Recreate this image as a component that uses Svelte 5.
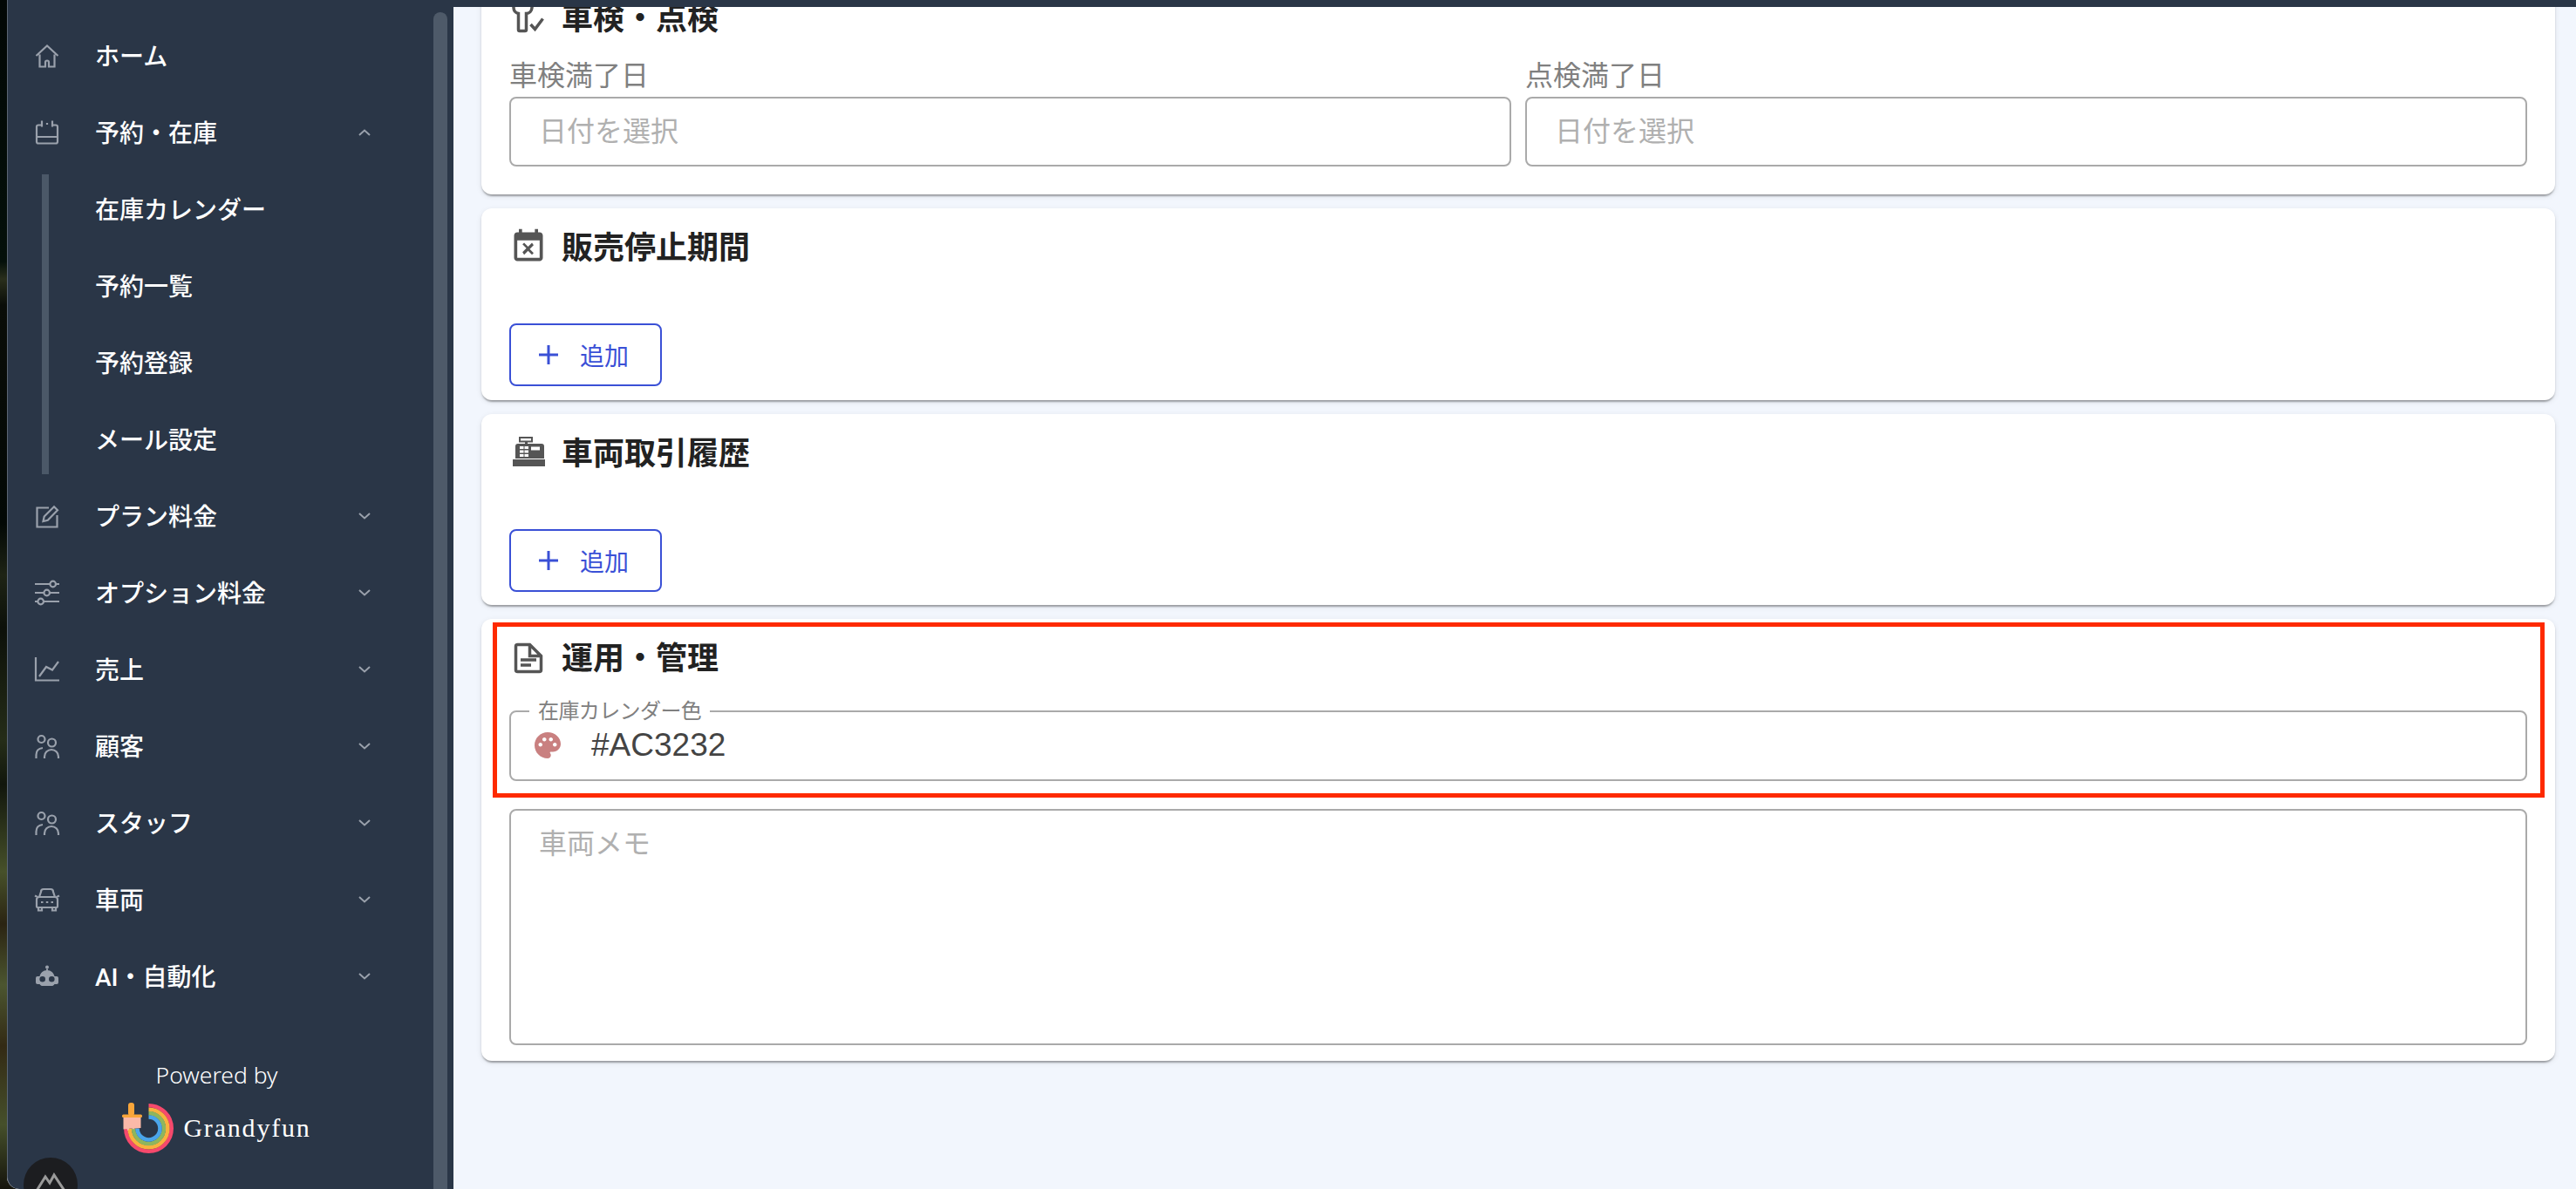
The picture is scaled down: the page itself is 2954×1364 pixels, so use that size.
<script>
  // sidebar icons, all drawn in a 28 box
  const icons = {
    home: "M1.500 14 14 2.500 26.500 14M5.500 12.500V26.500h6.500v-5a2 2 0 0 1 4 0v5h6.500V12.500",
    calendar: "M8 5.500H4a2 2 0 0 0-2 2v17a2 2 0 0 0 2 2h20a2 2 0 0 0 2-2v-17a2 2 0 0 0-2-2h-4M8 .5v7M20 .5v7M14 3v2M2 19h24",
    edit: "M16 4.500H2.500v22h23V13M9.500 20l1.200-5.500L22 3.200l4 4L14.800 18.800z",
    sliders: "M0 4h17M24 4h4M0 14h10M17 14h11M0 24h3M10 24h18M24 4a3.300 3.300 0 1 1-6.600 0 3.300 3.300 0 1 1 6.600 0M17 14a3.300 3.300 0 1 1-6.600 0 3.300 3.300 0 1 1 6.600 0M10 24a3.300 3.300 0 1 1-6.600 0 3.300 3.300 0 1 1 6.600 0",
    chart: "M1 0v26.500h27M5 22l8-11 7 3.500 7-9.500",
    people: "M1.500 28v-4c0-4.500 3-7.500 7.500-8M11 28v-2a8 8 0 0 1 16 0v2M11.500 6a4 4 0 1 1-8 0 4 4 0 1 1 8 0M24 10a4.500 4.500 0 1 1-9 0 4.500 4.500 0 1 1 9 0",
    car: "M5 11l2-6a3 3 0 0 1 3-3h8a3 3 0 0 1 3 3l2 6M2 14a3 3 0 0 1 3-3h18a3 3 0 0 1 3 3v8a1 1 0 0 1-1 1H3a1 1 0 0 1-1-1zM4 23v3.500h4V23M20 23v3.500h4V23M7 17h2.500M12.800 17h2.500M18.500 17h2.500M0 9.500l3 1.500M28 9.500L25 11",
    robot: "M14 1.500a2 2 0 1 1 0 4 2 2 0 1 1 0-4zM13 5h2v2h-2zM5.500 14C6.500 10 9.500 7 14 7s7.500 3 8.500 7H25a2 2 0 0 1 2 2v5a2 2 0 0 1-2 2h-2.500c-1 1.500-2 2-3 2H8.500c-1 0-2-.5-3-2H3a2 2 0 0 1-2-2v-5a2 2 0 0 1 2-2zM8.700 14a3.300 3.300 0 1 0 0 6.600 3.300 3.300 0 1 0 0-6.600zM19.300 14a3.300 3.300 0 1 0 0 6.600 3.300 3.300 0 1 0 0-6.600z",
  };

  const menu = [
    { label: "ホーム", icon: "home" },
    { label: "予約・在庫", icon: "calendar", open: true, children: ["在庫カレンダー", "予約一覧", "予約登録", "メール設定"] },
    { label: "プラン料金", icon: "edit", more: true },
    { label: "オプション料金", icon: "sliders", more: true },
    { label: "売上", icon: "chart", more: true },
    { label: "顧客", icon: "people", more: true },
    { label: "スタッフ", icon: "people", more: true },
    { label: "車両", icon: "car", more: true },
    { label: "AI・自動化", icon: "robot", more: true },
  ];

  const rings = [
    { r: 26.2, color: "#f6496c" },
    { r: 21.8, color: "#f9b23e" },
    { r: 17.4, color: "#8fb65c" },
    { r: 13, color: "#4aa5ea" },
  ];
</script>

<div class="page">
  <div class="window">
    <aside class="sidebar">
      <div class="nav">
        <ul class="menu">
          {#each menu as item}
            <li>
              <div class="row">
                <svg class="ic" class:solid={item.icon === "robot"} viewBox="0 0 28 28"><path d={icons[item.icon]} /></svg>
                <span class="label">{item.label}</span>
                {#if item.open}
                  <svg class="chev" viewBox="0 0 14 8"><path d="M1 7l6-5.500L13 7" /></svg>
                {:else if item.more}
                  <svg class="chev" viewBox="0 0 14 8"><path d="M1 1l6 5.500L13 1" /></svg>
                {/if}
              </div>
              {#if item.children}
                <div class="sub">
                  <ul>
                    {#each item.children as child}
                      <li class="row subrow"><span class="label">{child}</span></li>
                    {/each}
                  </ul>
                </div>
              {/if}
            </li>
          {/each}
        </ul>
        <div class="powered">
          <div class="by">Powered by</div>
          <div class="brand">
            <svg class="logo" viewBox="0 0 60 62">
              {#each rings as ring}
                <path d="M30.500 {31.5 - ring.r}A{ring.r} {ring.r} 0 1 1 {30.5 - ring.r} 31.500" fill="none" stroke={ring.color} stroke-width="4.600" />
              {/each}
              <rect x="7" y="2" width="7" height="15" rx="3" fill="#f9a63a" />
              <rect x="0" y="15.500" width="23" height="3.500" rx="1.500" fill="#f9a63a" />
              <path d="M1.500 19h20v12l-7 .500-2 1-1-1-3 0-2 3-1-2.500-4 .500z" fill="#fbb9a8" />
            </svg>
            <span class="name">Grandyfun</span>
          </div>
        </div>
      </div>
      <div class="thumb"></div>
    </aside>

    <main class="main">
      <div class="topbar"></div>
      <div class="content">
        <section class="card">
          <h2>
            <svg class="hicon" viewBox="0 0 44 44">
              <path class="line" d="M5 4v7a7 7 0 0 0 5.500 6.500V36a1.500 1.500 0 0 0 1.500 1.500h6a1.500 1.500 0 0 0 1.500-1.500V17.500A7 7 0 0 0 26 11V4" />
              <path class="line" d="M24.500 30l5 5.500 9-12" />
            </svg>
            <span>車検・点検</span>
          </h2>
          <div class="dates">
            <div>
              <div class="cap">車検満了日</div>
              <input class="box" placeholder="日付を選択" />
            </div>
            <div>
              <div class="cap">点検満了日</div>
              <input class="box" placeholder="日付を選択" />
            </div>
          </div>
        </section>

        <section class="card tight">
          <h2>
            <svg class="hicon" viewBox="0 0 24 24"><path d="M9.310 17l2.440-2.440L14.190 17l1.060-1.060-2.440-2.440 2.440-2.440L14.190 9.500l-2.440 2.440L9.310 9.500l-1.060 1.060 2.440 2.440-2.440 2.440L9.310 17zM19 3h-1V1h-2v2H8V1H6v2H5c-1.110 0-1.990.9-1.990 2L3 19c0 1.100.89 2 2 2h14c1.100 0 2-.9 2-2V5c0-1.100-.9-2-2-2zm0 16H5V8h14v11z" /></svg>
            <span>販売停止期間</span>
          </h2>
          <button class="add"><svg viewBox="0 0 22 22"><path d="M11 0v22M0 11h22" /></svg>追加</button>
        </section>

        <section class="card tight">
          <h2>
            <svg class="hicon" viewBox="0 0 44 44">
              <path fill-rule="evenodd" d="M10 12h27a3 3 0 0 1 3 3v14H7V15a3 3 0 0 1 3-3zM12 15v3h4.500v-3zM17.500 15v3h4.500v-3zM12 19.500v3h4.500v-3zM17.500 19.500v3h4.500v-3zM12 24v3h4.500v-3zM17.500 24v3h4.500v-3zM25 15.500v4h10v-4z" />
              <rect x="4" y="30" width="37" height="8" />
              <rect x="18" y="9" width="3" height="4" />
              <rect class="line thin" x="12" y="5" width="14" height="4.500" />
            </svg>
            <span>車両取引履歴</span>
          </h2>
          <button class="add"><svg viewBox="0 0 22 22"><path d="M11 0v22M0 11h22" /></svg>追加</button>
        </section>

        <section class="card last">
          <h2>
            <svg class="hicon" viewBox="0 0 44 44">
              <path class="line" d="M7.500 9.500a2 2 0 0 1 2-2h14l13 13v16a2 2 0 0 1-2 2h-25a2 2 0 0 1-2-2zM23.500 7.500v13h13" />
              <path class="line" d="M13 25h18M13 31h12" />
            </svg>
            <span>運用・管理</span>
          </h2>
          <fieldset class="outlined">
            <legend>在庫カレンダー色</legend>
            <div class="color">
              <svg class="palette" viewBox="0 0 24 24"><path d="M12 2C6.490 2 2 6.490 2 12s4.490 10 10 10c1.380 0 2.500-1.120 2.500-2.500 0-.61-.23-1.200-.64-1.670-.08-.1-.13-.21-.13-.33 0-.28.22-.5.5-.5H16c3.310 0 6-2.690 6-6 0-4.960-4.490-9-10-9zm5.500 11c-.83 0-1.500-.67-1.500-1.500s.67-1.500 1.500-1.500 1.500.67 1.500 1.500-.67 1.500-1.500 1.500zm-3-4c-.83 0-1.500-.67-1.500-1.500S13.670 6 14.500 6s1.500.67 1.500 1.500S15.330 9 14.500 9zM5 11.500c0-.83.67-1.500 1.500-1.500s1.500.67 1.500 1.500S7.330 13 6.500 13 5 12.330 5 11.500zm6-4c0 .83-.67 1.500-1.500 1.500S8 8.330 8 7.500 8.670 6 9.500 6s1.500.67 1.500 1.500z" /></svg>
              <span>#AC3232</span>
            </div>
          </fieldset>
          <textarea class="box memo" placeholder="車両メモ"></textarea>
          <div class="marker"></div>
        </section>
      </div>
    </main>
  </div>

  <div class="badge">
    <svg viewBox="0 0 34 22"><path d="M1 21 11 5l5 7 5-9 12 18" /></svg>
  </div>
</div>

<style>
  :global(body) {
    margin: 0;
    overflow: hidden;
  }

  .page {
    position: relative;
    height: 1364px;
    overflow: hidden;
    padding-left: 8px;
    box-sizing: border-box;
    font-family: Roboto, "Noto Sans CJK JP", sans-serif;
    /* blurred wallpaper showing at the window edge */
    background: linear-gradient(180deg, #020705 0, #04100a 300px, #2a2f1c 320px, #0a0d08 350px, #020805 600px, #1e2415 660px, #0c1009 720px, #252d18 850px, #11160c 900px, #47512a 1000px, #2b2412 1060px, #4c5630 1130px, #332a14 1200px, #46502b 1290px, #15140c 1364px);
  }

  .window {
    display: flex;
    height: 100%;
    background: #f2f6fd;
    border-bottom-left-radius: 14px;
    overflow: hidden;
  }

  .sidebar {
    display: flex;
    width: 512px;
    flex: none;
    box-sizing: border-box;
    padding-right: 7px;
    background: #2a3647;
    border-left: 1px solid #5b6573;
    border-bottom-left-radius: 14px;
    color: #fff;
  }

  .nav {
    flex: 1;
    min-width: 0;
    padding-top: 20px;
  }

  ul {
    list-style: none;
    margin: 0;
    padding: 0;
  }

  .row {
    display: flex;
    align-items: center;
    height: 88px;
    padding-left: 31px;
  }

  .label {
    margin-left: 41px;
    margin-top: -2px;
    font-size: 28px;
    font-weight: 500;
    white-space: nowrap;
  }

  .ic {
    width: 28px;
    height: 28px;
    flex: none;
    overflow: visible;
    fill: none;
    stroke: #9aa1ac;
    stroke-width: 2.2;
  }

  .ic.solid {
    fill: #9aa1ac;
    fill-rule: evenodd;
    stroke: none;
  }

  .chev {
    width: 14px;
    height: 8px;
    margin-left: auto;
    margin-right: 72px;
    fill: none;
    stroke: #9aa1ac;
    stroke-width: 2;
  }

  .sub {
    display: flow-root;
    margin: 4px 0 4px 39px;
    border-left: 8px solid #4b5868;
  }

  .sub ul {
    margin: -4px 0;
  }

  .subrow {
    padding-left: 12px;
  }

  .powered {
    margin-top: 52px;
    display: flex;
    flex-direction: column;
    align-items: center;
    width: 479px;
  }

  .by {
    font-family: "Noto Sans", sans-serif;
    font-size: 26.500px;
    font-weight: 300;
    line-height: 34px;
  }

  .brand {
    display: flex;
    align-items: center;
    gap: 10px;
    margin-top: 13px;
  }

  .logo {
    width: 60px;
    height: 62px;
  }

  .name {
    font-family: "Liberation Serif", serif;
    font-size: 30px;
    letter-spacing: 1.800px;
  }

  .thumb {
    width: 16px;
    margin-top: 14px;
    flex: none;
    background: #4e5a69;
    border-radius: 8px 8px 0 0;
  }

  .main {
    position: relative;
    flex: 1;
    min-width: 0;
    overflow: hidden;
  }

  .topbar {
    position: relative;
    z-index: 2;
    height: 8px;
    background: #2a3647;
  }

  .content {
    display: flex;
    flex-direction: column;
    gap: 16px;
    margin-top: -32px;
    padding: 0 24px 0 32px;
  }

  .card {
    position: relative;
    padding: 0 32px 32px;
    background: #fff;
    border-radius: 12px;
    box-shadow: 0 4px 2px -2px rgba(0, 0, 0, 0.2), 0 2px 2px 0 rgba(0, 0, 0, 0.14), 0 2px 6px 0 rgba(0, 0, 0, 0.1);
  }

  .card.tight {
    padding-bottom: 15.500px;
  }

  .card.last {
    padding-bottom: 18px;
  }

  h2 {
    display: flex;
    align-items: center;
    gap: 16px;
    height: 88px;
    margin: 0;
    font-size: 36px;
    font-weight: 700;
    color: #222;
  }

  h2 span {
    margin-top: -4px;
  }

  .hicon {
    width: 44px;
    height: 44px;
    flex: none;
    fill: #555;
  }

  .hicon .line {
    fill: none;
    stroke: #555;
    stroke-width: 3.500;
  }

  .hicon .thin {
    stroke-width: 2;
  }

  .dates {
    display: grid;
    grid-template-columns: 1fr 1fr;
    gap: 16px;
    margin-top: -1px;
  }

  .cap {
    font-size: 32px;
    line-height: 48px;
    color: #808080;
  }

  .box {
    display: block;
    width: 100%;
    box-sizing: border-box;
    border: 2px solid #aaa;
    border-radius: 8px;
    background: #fff;
    outline: none;
    font-family: inherit;
    font-size: 32px;
    color: #444;
  }

  input.box {
    height: 80px;
    padding: 0 32px;
  }

  .box::placeholder {
    color: #b0b0b0;
    opacity: 1;
  }

  .add {
    display: flex;
    align-items: center;
    gap: 25px;
    width: 175px;
    height: 72px;
    margin-top: 44px;
    padding: 0 0 0 32px;
    box-sizing: border-box;
    border: 2px solid #3a50d6;
    border-radius: 8px;
    background: #fff;
    font-family: inherit;
    font-size: 28px;
    color: #3a50d6;
  }

  .add svg {
    width: 22px;
    height: 22px;
    fill: none;
    stroke: #3a50d6;
    stroke-width: 3;
  }

  .outlined {
    margin: 6px 0 0;
    padding: 0 0 12px 27px;
    min-width: 0;
    border: 2px solid #aaa;
    border-radius: 8px;
  }

  legend {
    margin-left: -6px;
    padding: 0 10px;
    font-size: 24px;
    line-height: 24px;
    color: #808080;
    letter-spacing: -0.6px;
  }

  .color {
    display: flex;
    align-items: center;
    height: 54px;
    font-family: "Liberation Sans", sans-serif;
    font-size: 37px;
    color: #444;
  }

  .palette {
    width: 36px;
    height: 36px;
    margin-left: -3px;
    margin-right: 32px;
    fill: #c98080;
  }

  .memo {
    height: 271px;
    margin-top: 32px;
    padding: 12px 32px;
    resize: none;
  }

  /* red annotation drawn on top of the screenshot */
  .marker {
    position: absolute;
    left: 13px;
    top: 4px;
    width: 2353px;
    height: 201px;
    box-sizing: border-box;
    border: 5px solid #fe2a00;
    pointer-events: none;
  }

  .badge {
    position: absolute;
    left: 27px;
    top: 1328px;
    width: 62px;
    height: 62px;
    display: flex;
    justify-content: center;
    padding-top: 17px;
    box-sizing: border-box;
    border-radius: 50%;
    background: #1c1d20;
  }

  .badge svg {
    width: 34px;
    height: 22px;
    fill: none;
    stroke: #9a9a9a;
    stroke-width: 3;
  }
</style>
